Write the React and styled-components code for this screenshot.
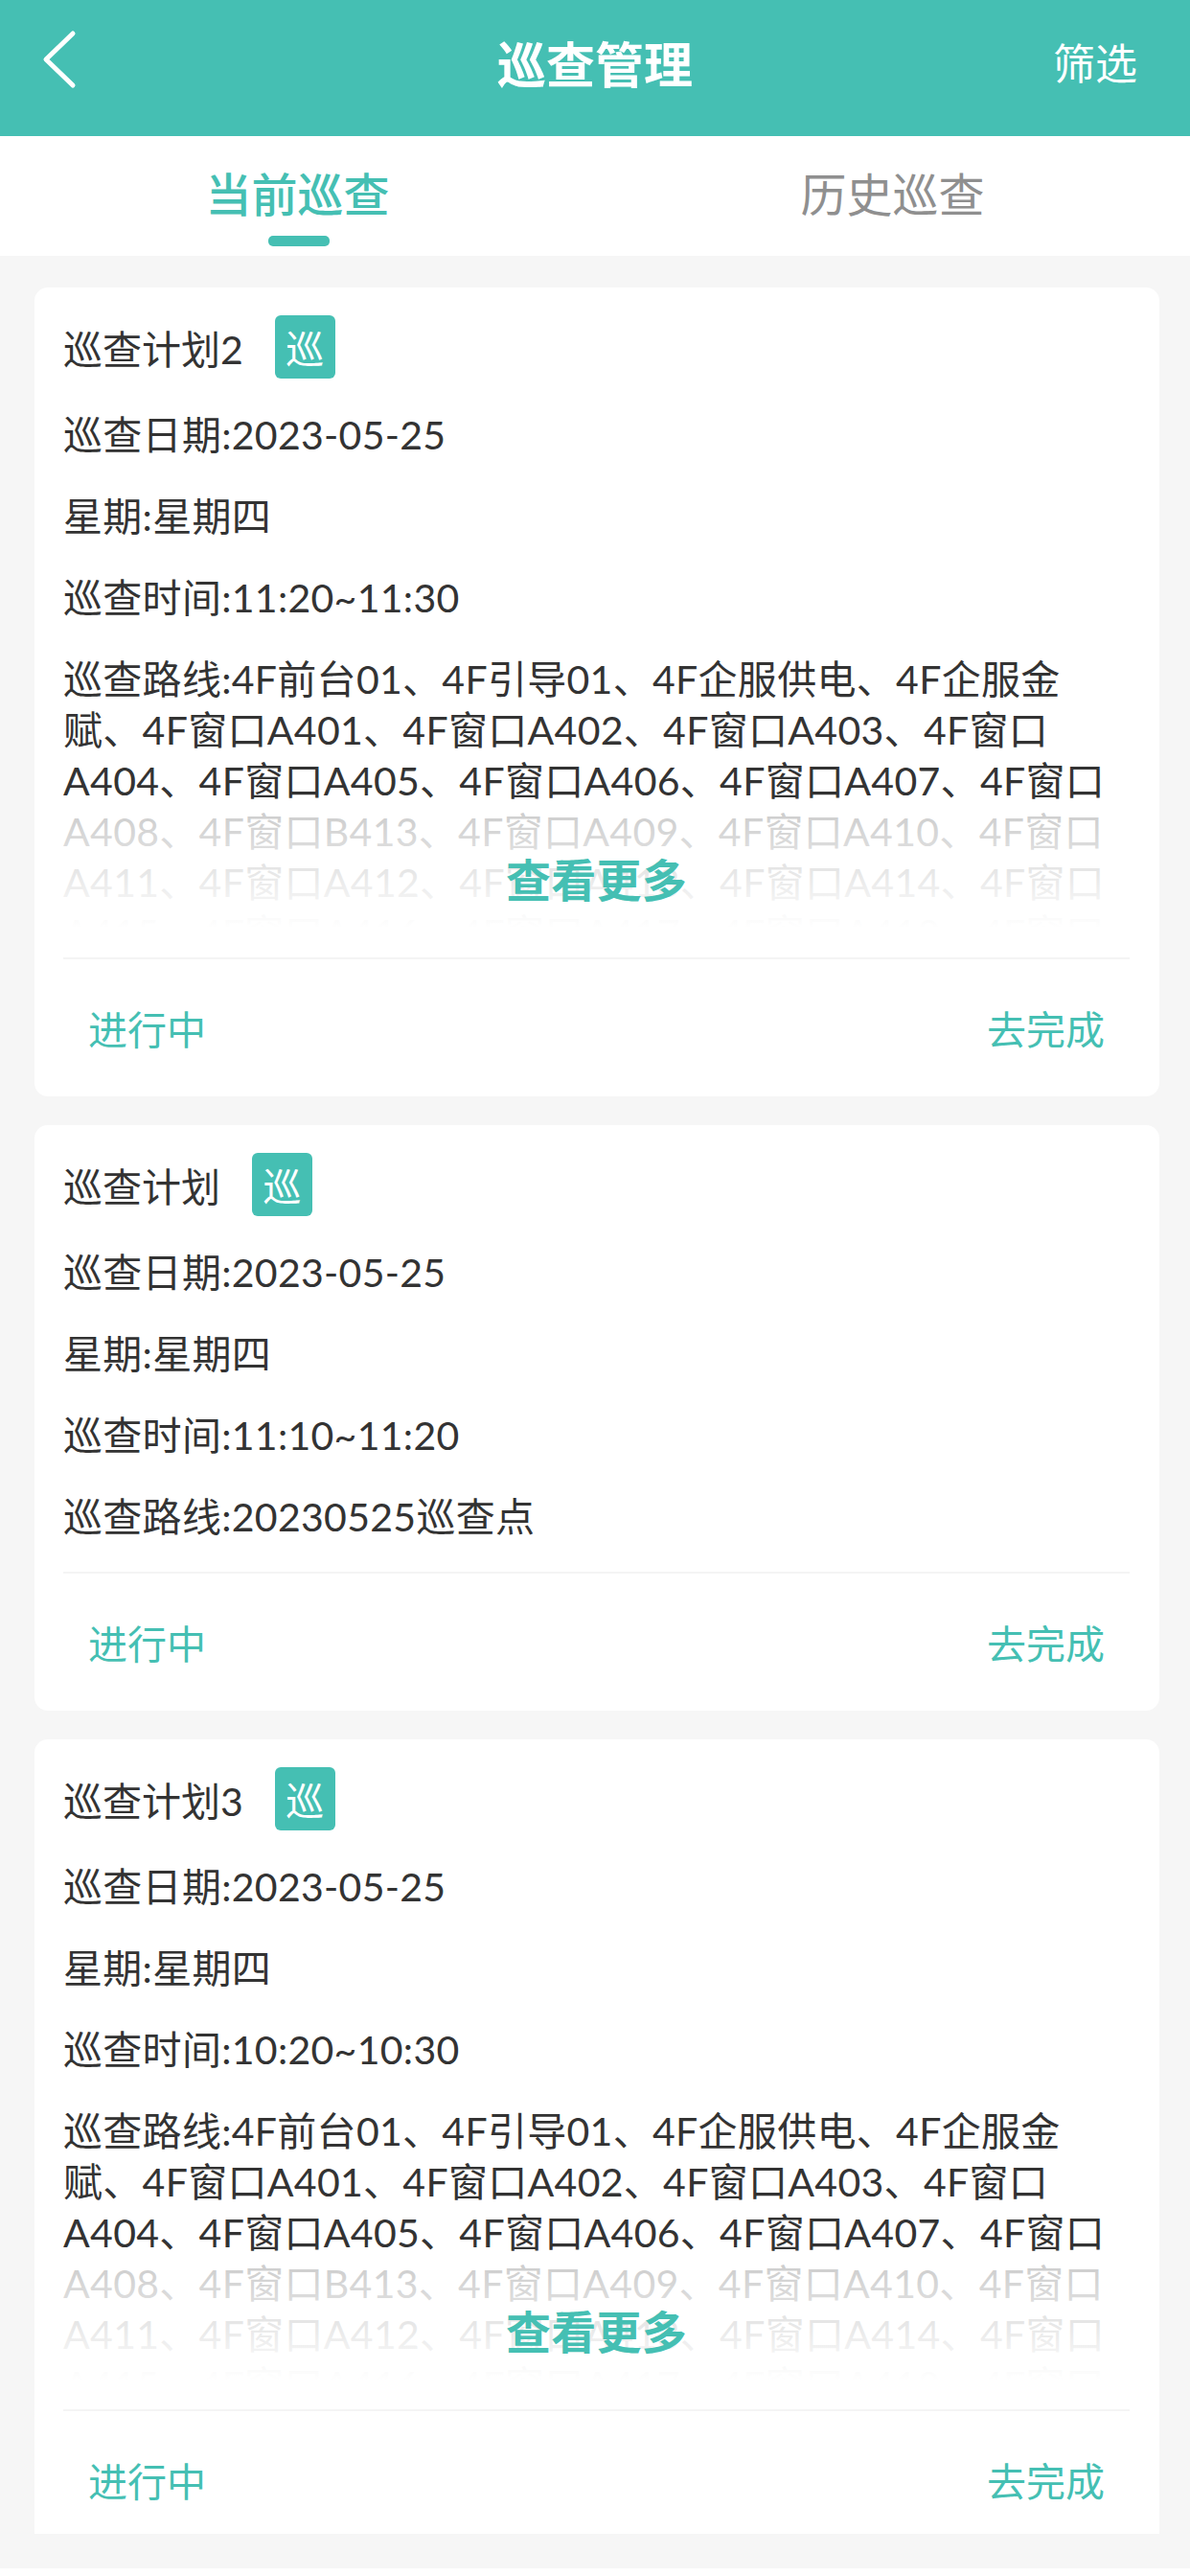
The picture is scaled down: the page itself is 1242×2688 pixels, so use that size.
import React from "react";
import styled, { createGlobalStyle } from "styled-components";

const Global = createGlobalStyle`
  html, body { margin: 0; padding: 0; background: #fff; }
  * { box-sizing: border-box; }
  body { font-family: "Lato", "Noto Sans CJK SC", "Noto Sans", sans-serif; }
`;
const TEAL = "#45bfb3";

const Page = styled.div`width: 1242px; height: 2680px; background: #f6f6f6; overflow: hidden;`;
const Header = styled.header`
  position: relative; height: 142px; background: ${TEAL}; color: #fff;
  display: flex; align-items: center; justify-content: space-between; padding: 0 55px 0 43px;
`;
const BackIcon = styled.svg`width: 38px; height: 62px; margin-top: -18px; display: block;`;
const Title = styled.h1`
  position: absolute; left: 0; right: 0; top: 38px; margin: 0; text-align: center;
  font-size: 51px; line-height: 60px; font-weight: 700;
`;
const Filter = styled.span`font-size: 44px; line-height: 50px; margin-top: -10px;`;
const Tabs = styled.nav`display: grid; grid-template-columns: 1fr 1fr; height: 125px; background: #fff;`;
const Tab = styled.div`
  position: relative; display: flex; justify-content: center; padding-top: 31px;
  font-size: 48px; line-height: 60px; color: ${p => (p.$active ? TEAL : "#8f8f8f")};
  font-weight: ${p => (p.$active ? 500 : 400)};
  &::after {
    content: ""; display: ${p => (p.$active ? "block" : "none")};
    position: absolute; left: 50%; margin-left: -31px; bottom: 10px; width: 64px; height: 11px;
    border-radius: 5px; background: ${TEAL};
  }
`;
const List = styled.main`display: flex; flex-direction: column; gap: 30px; padding: 33px 32px 30px 36px;`;
const Card = styled.article`
  background: #fff; border-radius: ${p => (p.$square ? "14px 14px 0 0" : "14px")};
  padding: 29px 31px 0 30px;
`;
const Row = styled.div`font-size: 41px; line-height: 53px; color: #333; margin-top: 32px; letter-spacing: 0.3px;`;
const TitleRow = styled.div`display: flex; align-items: center; gap: 33px; height: 66px; font-size: 41px; color: #333; margin-bottom: 2px;`;
const Badge = styled.span`
  width: 63px; height: 66px; border-radius: 6px; background: ${TEAL}; color: #fff;
  display: flex; align-items: center; justify-content: center; font-size: 40px;
`;
const Route = styled.div`
  position: relative; margin-top: 32px; font-size: 41px; line-height: 53px; color: #333; letter-spacing: 0.3px;
  overflow: hidden; max-height: ${p => (p.$collapsed ? "286px" : "none")};
`;
const Fade = styled.div`
  position: absolute; left: 0; right: 0; bottom: 0; height: 128px;
  background: linear-gradient(rgba(255,255,255,.74), #fff);
`;
const More = styled.span`
  position: absolute; left: 0; right: 0; top: 206px; text-align: center;
  font-size: 47px; line-height: 60px; font-weight: 700; color: ${TEAL};
`;
const Divider = styled.div`height: 2px; background: #f4f4f4; margin-top: 31px;`;
const Footer = styled.footer`
  display: flex; justify-content: space-between; padding: 48px 26px 0;
  height: ${p => (p.$short ? "128px" : "143px")};
  font-size: 41px; line-height: 52px; color: ${TEAL};
`;

const ROUTE = "巡查路线:4F前台01、4F引导01、4F企服供电、4F企服金赋、4F窗口A401、4F窗口A402、4F窗口A403、4F窗口A404、4F窗口A405、4F窗口A406、4F窗口A407、4F窗口A408、4F窗口B413、4F窗口A409、4F窗口A410、4F窗口A411、4F窗口A412、4F窗口A413、4F窗口A414、4F窗口A415、4F窗口A416、4F窗口A417、4F窗口A418、4F窗口";

const plans = [
  { name: "巡查计划2", time: "11:20~11:30", route: ROUTE, collapsed: true },
  { name: "巡查计划", time: "11:10~11:20", route: "巡查路线:20230525巡查点" },
  { name: "巡查计划3", time: "10:20~10:30", route: ROUTE, collapsed: true, last: true },
];

export default function App() {
  return (
    <Page>
      <Global />
      <Header>
        <BackIcon viewBox="0 0 38 62" fill="none" stroke="#fff" strokeWidth="5" strokeLinecap="round" strokeLinejoin="round">
          <polyline points="33,4 5,31 33,58" />
        </BackIcon>
        <Title>巡查管理</Title>
        <Filter>筛选</Filter>
      </Header>
      <Tabs>
        <Tab $active>当前巡查</Tab>
        <Tab>历史巡查</Tab>
      </Tabs>
      <List>
        {plans.map(p => (
          <Card key={p.name} $square={p.last}>
            <TitleRow>{p.name}<Badge>巡</Badge></TitleRow>
            <Row>巡查日期:2023-05-25</Row>
            <Row>星期:星期四</Row>
            <Row>巡查时间:{p.time}</Row>
            <Route $collapsed={p.collapsed}>
              {p.route}
              {p.collapsed && <Fade />}
              {p.collapsed && <More>查看更多</More>}
            </Route>
            <Divider />
            <Footer $short={p.last}><span>进行中</span><span>去完成</span></Footer>
          </Card>
        ))}
      </List>
    </Page>
  );
}
